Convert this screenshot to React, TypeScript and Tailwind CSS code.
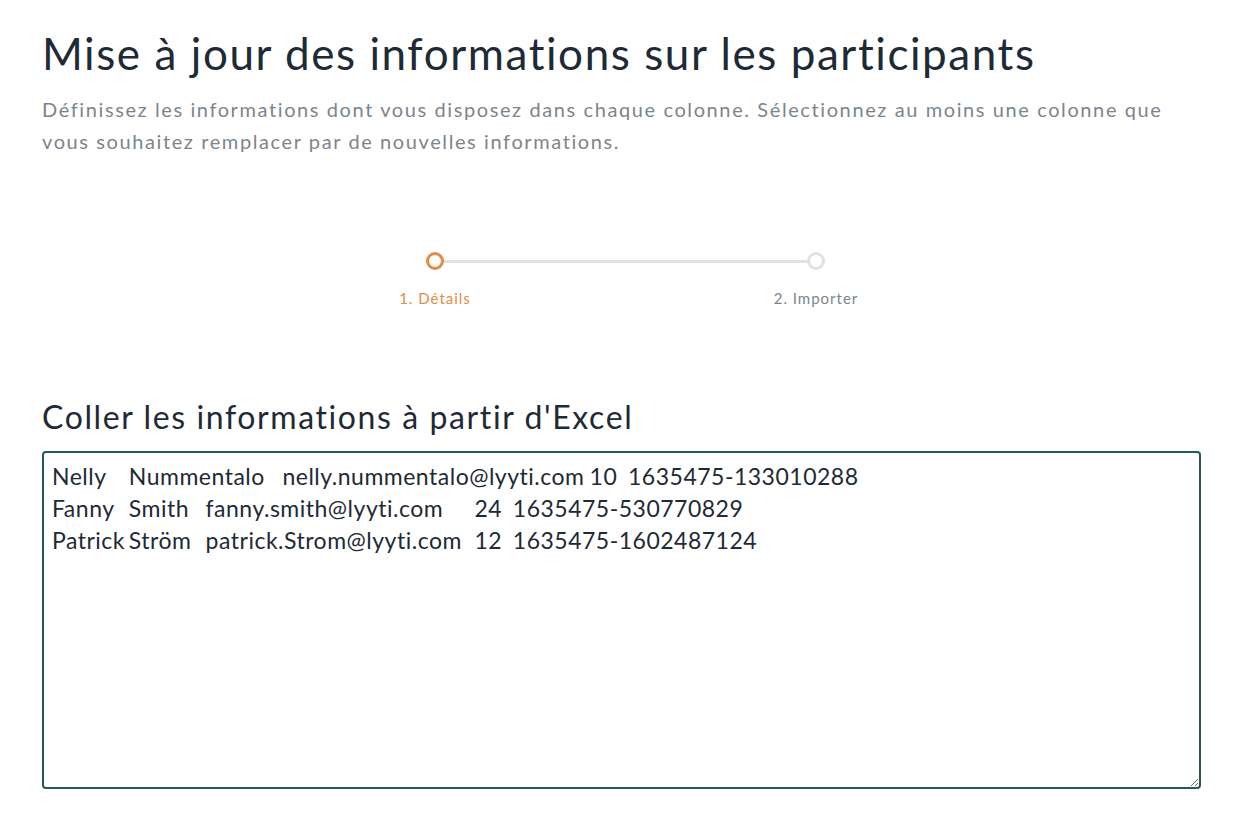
const rows = [
  "Nelly\tNummentalo\tnelly.nummentalo@lyyti.com\t10\t1635475-133010288",
  "Fanny\tSmith\tfanny.smith@lyyti.com\t24\t1635475-530770829",
  "Patrick\tStröm\tpatrick.Strom@lyyti.com\t12\t1635475-1602487124",
];

function Stepper() {
  return (
    <div className="flex justify-center pl-[8px] pt-[95px]">
      <div className="flex w-[511px] flex-col">
        <div className="flex items-center px-[56px]">
          <span className="h-[18px] w-[18px] shrink-0 rounded-full border-[3px] border-[#e38b48] bg-white" />
          <span className="h-[3px] flex-1 bg-[#e2e2e2]" />
          <span className="h-[18px] w-[18px] shrink-0 rounded-full border-[3px] border-[#e2e2e2] bg-white" />
        </div>
        <div className="mt-[18px] flex justify-between text-[15px] leading-[20px] tracking-[1px]">
          <span className="w-[130px] text-center text-[#e38b48]">1. Détails</span>
          <span className="w-[130px] text-center text-[#7d858b]">2. Importer</span>
        </div>
      </div>
    </div>
  );
}

export default function App() {
  return (
    <div
      className="min-h-[820px] bg-white pl-[42px] pr-[39px] pt-[21px] text-[#1e2a35]"
      style={{ fontFamily: "Lato, 'Noto Sans', sans-serif" }}
    >
      <h1 className="text-[44px] leading-[64px] tracking-[1.57px]">
        Mise à jour des informations sur les participants
      </h1>
      <p className="mt-[8px] text-[20px] leading-[32px] tracking-[1.6px] text-[#7d858b]">
        Définissez les informations dont vous disposez dans chaque colonne. Sélectionnez au moins une colonne que
        vous souhaitez remplacer par de nouvelles informations.
      </p>

      <Stepper />

      <h2 className="mt-[87px] text-[32px] leading-[44px] tracking-[1.6px]">
        Coller les informations à partir d'Excel
      </h2>
      <textarea
        className="mt-[12px] block h-[338px] w-full resize rounded-[4px] border-2 border-[#255b56] px-[8px] py-[7px] text-[23px] leading-[32px] tracking-[0.5px] text-[#1e2a35] outline-none [tab-size:38.4px]"
        defaultValue={rows.join("\n")}
        spellCheck={false}
      />
    </div>
  );
}
